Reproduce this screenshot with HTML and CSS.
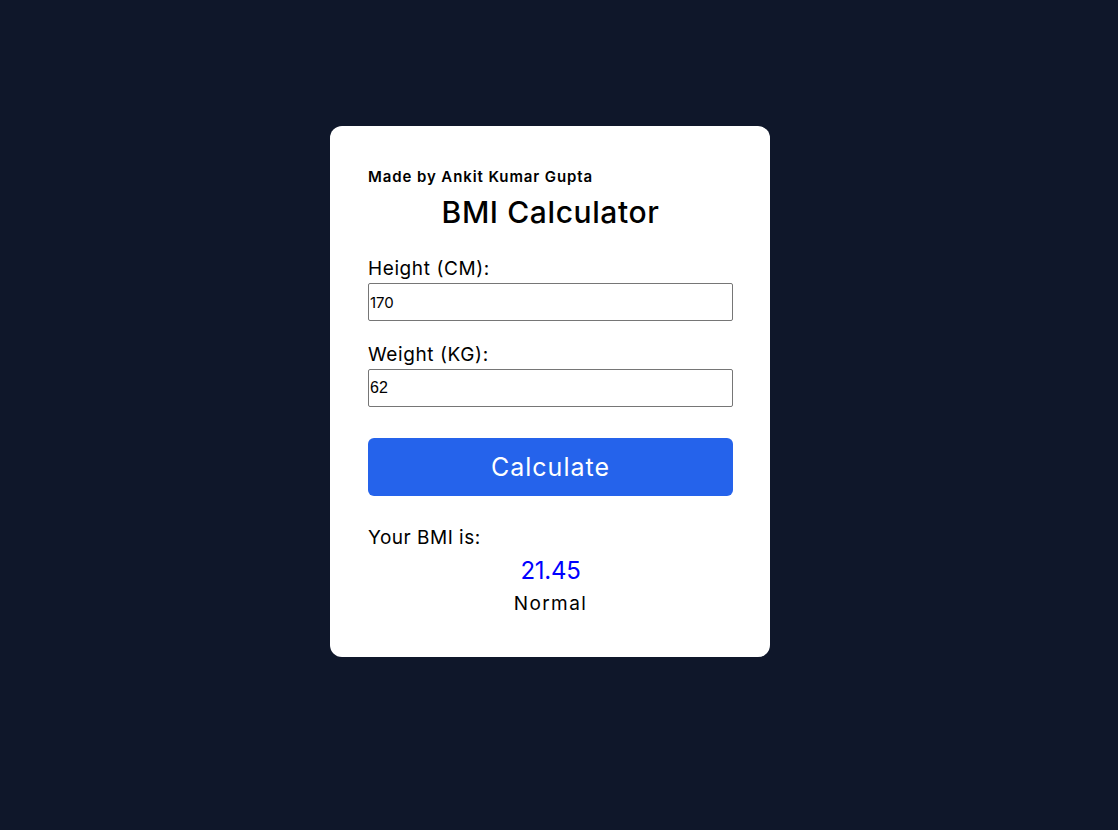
FILE: index.html
```html
<!DOCTYPE html>
<html lang="en">
<head>
<meta charset="utf-8">
<title>BMI Calculator</title>
<link rel="stylesheet" href="styles.css">
</head>
<body>
<main class="page">
  <section class="card">
    <p class="author">Made by Ankit Kumar Gupta</p>
    <h1 class="title">BMI Calculator</h1>
    <div class="field">
      <label class="label" for="height">Height (CM):</label>
      <input class="input" id="height" type="text" value="170">
    </div>
    <div class="field">
      <label class="label" for="weight">Weight (KG):</label>
      <input class="input input-arial" id="weight" type="text" value="62">
    </div>
    <button class="btn" type="button">Calculate</button>
    <div class="result">
      <p class="result-label">Your BMI is:</p>
      <p class="result-value">21.45</p>
      <p class="result-status">Normal</p>
    </div>
  </section>
</main>
</body>
</html>
```
FILE: styles.css
```css
* { box-sizing: border-box; }
html, body { margin: 0; padding: 0; }
body {
  background: #0f172a;
  font-family: "Inter", "Open Sans", sans-serif;
  color: #000;
  min-height: 830px;
}
.page {
  display: flex;
  justify-content: center;
  padding: 126px 18px 0 0;
}
.card {
  width: 440px;
  background: #fff;
  border-radius: 12px;
  padding: 40px 37px 39px 38px;
  display: flex;
  flex-direction: column;
}
.author {
  margin: 0;
  font-size: 15px;
  font-weight: 600;
  line-height: 22px;
  letter-spacing: 0.9px;
}
.title {
  margin: 6px 0 0;
  text-align: center;
  font-size: 30px;
  font-weight: 500;
  line-height: 36px;
  letter-spacing: 0.6px;
}
.field {
  display: flex;
  flex-direction: column;
  margin-top: 25px;
}
.field + .field { margin-top: 20px; }
.label {
  font-size: 19px;
  line-height: 28px;
  letter-spacing: 0.6px;
}
.input {
  height: 38px;
  width: 100%;
  border: 1px solid #767676;
  border-radius: 2px;
  padding: 0 1px;
  font-family: "Inter", sans-serif;
  font-size: 15px;
  color: #000;
}
.input-arial {
  font-family: "Liberation Sans", Arial, sans-serif;
  font-size: 16px;
}
.btn {
  margin-top: 31px;
  height: 58px;
  width: 100%;
  border: none;
  border-radius: 6px;
  background: #2563eb;
  color: #fff;
  font-family: "Inter", sans-serif;
  font-size: 25px;
  font-weight: 400;
  letter-spacing: 1px;
}
.result {
  margin-top: 28px;
  display: flex;
  flex-direction: column;
}
.result p { margin: 0; }
.result-label {
  font-size: 19px;
  line-height: 28px;
  letter-spacing: 0.5px;
}
.result-value {
  text-align: center;
  color: #0000ff;
  font-size: 24px;
  line-height: 38px;
  letter-spacing: -0.3px;
}
.result-status {
  margin-top: 1px;
  text-align: center;
  font-size: 19px;
  line-height: 28px;
  letter-spacing: 1.4px;
}
```
